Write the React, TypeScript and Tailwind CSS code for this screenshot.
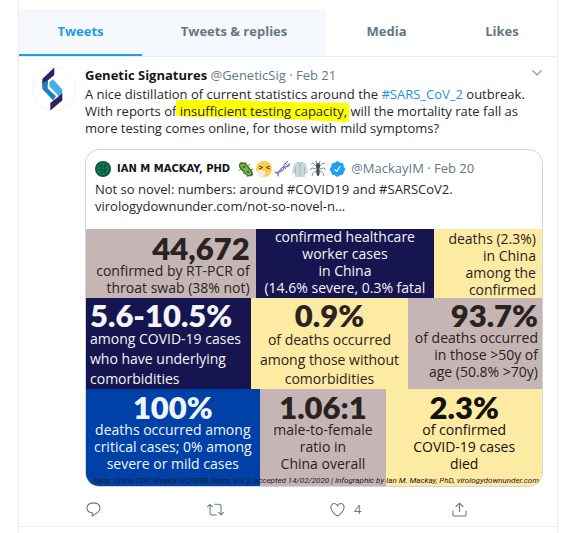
import React from 'react';

const tabs = [
  { id: 'tweets', label: 'Tweets', className: 'bg-[#f5f9fd] text-[#1d9ceb] border-[#1d9ceb]' },
  { id: 'replies', label: 'Tweets & replies', className: 'bg-[#f5f9fd] text-[#657786] border-transparent' },
  { id: 'media', label: 'Media', className: 'text-[#657786] border-transparent' },
  { id: 'likes', label: 'Likes', className: 'text-[#657786] border-transparent' },
];

const REPLY =
  'M14.046 2.242l-4.148-.01h-.002c-4.374 0-7.8 3.427-7.8 7.802 0 4.098 3.186 7.206 7.465 7.37v3.828c0 .108.044.286.12.403.142.225.384.347.632.347.138 0 .277-.038.402-.118.264-.168 6.473-4.14 8.088-5.506 1.902-1.61 3.04-3.97 3.043-6.312v-.017c-.006-4.367-3.43-7.787-7.8-7.788zm3.787 12.972c-1.134.96-4.862 3.405-6.772 4.643V16.67c0-.414-.335-.75-.75-.75h-.396c-3.66 0-6.318-2.476-6.318-5.886 0-3.534 2.768-6.302 6.3-6.302l4.147.01h.002c3.532 0 6.3 2.766 6.302 6.296-.003 1.91-.942 3.844-2.514 5.176z';
const RETWEET =
  'M23.77 15.67c-.292-.293-.767-.293-1.06 0l-2.22 2.22V7.65c0-2.068-1.683-3.75-3.75-3.75h-5.85c-.414 0-.75.336-.75.75s.336.75.75.75h5.85c1.24 0 2.25 1.01 2.25 2.25v10.24l-2.22-2.22c-.293-.293-.768-.293-1.06 0s-.294.768 0 1.06l3.5 3.5c.145.147.337.22.53.22s.383-.072.53-.22l3.5-3.5c.294-.292.294-.767 0-1.06zm-10.66 3.28H7.26c-1.24 0-2.25-1.01-2.25-2.25V6.46l2.22 2.22c.148.147.34.22.532.22s.384-.073.53-.22c.293-.293.293-.768 0-1.06l-3.5-3.5c-.293-.294-.768-.294-1.06 0l-3.5 3.5c-.294.292-.294.767 0 1.06s.767.293 1.06 0l2.22-2.22V16.7c0 2.068 1.683 3.75 3.75 3.75h5.85c.414 0 .75-.336.75-.75s-.337-.75-.75-.75z';
const LIKE =
  'M12 21.638h-.014C9.403 21.59 1.95 14.856 1.95 8.478c0-3.064 2.525-5.754 5.403-5.754 2.29 0 3.83 1.58 4.646 2.73.814-1.148 2.354-2.73 4.645-2.73 2.88 0 5.404 2.69 5.404 5.755 0 6.376-7.454 13.11-10.037 13.157H12zM7.354 4.225c-2.08 0-3.903 1.988-3.903 4.255 0 5.74 7.034 11.596 8.55 11.658 1.518-.062 8.55-5.917 8.55-11.658 0-2.267-1.823-4.255-3.903-4.255-2.528 0-3.94 2.936-3.952 2.965-.23.562-1.156.562-1.387 0-.014-.03-1.425-2.965-3.954-2.965z';
const SHARE =
  'M17.53 7.47l-5-5c-.293-.293-.768-.293-1.06 0l-5 5c-.294.293-.294.768 0 1.06s.767.294 1.06 0l3.72-3.72V15c0 .414.336.75.75.75s.75-.336.75-.75V4.81l3.72 3.72c.146.147.338.22.53.22s.384-.072.53-.22c.293-.293.293-.767 0-1.06zM19.708 21.944H4.292C3.028 21.944 2 20.916 2 19.652V14c0-.414.336-.75.75-.75s.75.336.75.75v5.652c0 .437.355.792.792.792h15.416c.437 0 .792-.355.792-.792V14c0-.414.336-.75.75-.75s.75.336.75.75v5.652c0 1.264-1.028 2.292-2.292 2.292z';
const VERIFIED =
  'M22.5 12.5c0-1.58-.875-2.95-2.148-3.6.154-.435.238-.905.238-1.4 0-2.21-1.71-3.998-3.818-3.998-.47 0-.92.084-1.336.25C14.818 2.415 13.51 1.5 12 1.5s-2.816.917-3.437 2.25c-.415-.165-.866-.25-1.336-.25-2.11 0-3.818 1.79-3.818 4 0 .494.083.964.237 1.4-1.272.65-2.147 2.018-2.147 3.6 0 1.495.782 2.798 1.942 3.486-.02.17-.032.34-.032.514 0 2.21 1.708 4 3.818 4 .47 0 .92-.086 1.335-.25.62 1.334 1.926 2.25 3.437 2.25 1.512 0 2.818-.916 3.437-2.25.415.163.865.248 1.336.248 2.11 0 3.818-1.79 3.818-4 0-.174-.012-.344-.033-.513 1.158-.687 1.943-1.99 1.943-3.484zm-6.616-3.334l-4.334 6.5c-.145.217-.382.334-.625.334-.143 0-.288-.04-.416-.126l-.115-.094-2.415-2.415c-.293-.293-.293-.768 0-1.06s.768-.294 1.06 0l1.77 1.767 3.825-5.74c.23-.345.696-.436 1.04-.207.346.23.44.696.21 1.04z';

const actions = [
  { label: 'Reply', path: REPLY, count: '' },
  { label: 'Retweet', path: RETWEET, count: '' },
  { label: 'Like', path: LIKE, count: '4' },
  { label: 'Share', path: SHARE, count: '' },
];

function Avatar() {
  return (
    <svg viewBox="0 0 44 44" className="w-11 h-11 shrink-0" aria-hidden="true">
      <circle cx="22" cy="22" r="21.500" fill="#fff" stroke="#f1f3f5" />
      <path d="M22.300 0.500V8L15.700 13.500V17L10.300 19V12z" fill="#2b2363" />
      <path d="M10.300 16L15.700 13.500V21.500L24 29L21.300 33.500L10.300 22z" fill="#1d7fbd" />
      <path d="M17.500 15L21 12.300L30.300 22.500V27.500L27 29.500L17.500 19.500z" fill="#45b0e2" />
      <path d="M30.300 26.500V33.500L18.300 43.500V36z" fill="#2b2363" />
    </svg>
  );
}

function VirusAvatar() {
  return (
    <svg viewBox="0 0 16 16" className="w-4 h-4 mr-1.5" aria-hidden="true">
      <circle cx="8" cy="8" r="8" fill="#0b5a3c" />
      <circle cx="8" cy="8" r="6" fill="#128055" />
      <path d="M3 6l3-2 3 2 3-2M3 9l3-1 3 2 4-2M5 12l3-1 3 1M6 3l1 9M10 3l0 9" stroke="#0a4a30" fill="none" />
    </svg>
  );
}

function Emojis() {
  return (
    <span className="flex gap-0.5 ml-2 mr-1" aria-hidden="true">
      {/* microbe */}
      <svg viewBox="0 0 16 16" className="w-4 h-4">
        <path d="M3 1l1 3M8 1L7 3M1 5l3 0M12 3l-2 2M15 8l-3 1M1 9l4-1M5 13l2-2M9 16l1-3M15 14l-3-1" stroke="#5c913b" strokeWidth="1" />
        <path d="M1.500 2.500c2-2 5.500-1.500 7.500 1l4 5c2.500 3 2.500 5.500 0.500 6.500s-5.500 0-7.500-3L2.500 8C0.500 6 0.500 3.500 1.500 2.500z" fill="#3e721d" />
        <path d="M2.500 3.500c2-1.500 4.500-0.500 5.500 1l4 5c1.500 2 1.500 3.500 0.500 4.500s-4.500 0-5.500-3L3.500 7C2.500 6 1.500 4.500 2.500 3.500z" fill="#77b255" />
        <circle cx="6" cy="6" r="1.200" fill="#3e721d" />
        <circle cx="10" cy="11" r="1.200" fill="#3e721d" />
      </svg>
      {/* sneezing face */}
      <svg viewBox="0 0 16 16" className="w-4 h-4">
        <circle cx="8" cy="8" r="8" fill="#ffcc4d" />
        <path d="M3 5l4 1.500-4 1.500M14 5l-4 1.500 4 1.500" stroke="#664500" fill="none" />
        <path d="M0.500 10.500l4-1.500 4 1.500 1 2-3 3-4 .5-2-2z" fill="#f4f7f9" />
        <path d="M2 12l3-1M3 14l4-1.500" stroke="#ccd6dd" strokeWidth=".7" />
      </svg>
      {/* dna */}
      <svg viewBox="0 0 16 16" className="w-4 h-4">
        <path d="M2 12l3 2M6 10l1 1M9 5l3 3M11 2l3 3" stroke="#dd2e44" strokeWidth=".8" />
        <path d="M0.500 11c6 2 5-3 8-4.500s6 1 7-4" stroke="#3b88c3" strokeWidth="1.300" fill="none" />
        <path d="M4 15.500c-1-6 4-4 5.500-7s-1-6 4.500-8" stroke="#9268ca" strokeWidth="1.300" fill="none" />
      </svg>
      {/* lab coat */}
      <svg viewBox="0 0 16 16" className="w-4 h-4">
        <path d="M5 1h6l3 2 2 9-3 1v3H3v-3l-3-1 2-9z" fill="#ccd6dd" />
        <path d="M6 1l2 4 2-4M8 5v10M3.500 6v7M12.500 6v7" stroke="#a9b8c2" fill="none" />
      </svg>
      {/* mosquito */}
      <svg viewBox="0 0 16 16" className="w-4 h-4">
        <path d="M7 6L3 2 1 3M7 8L2 7 0 9M7 10l-4 2-1 3M9 6l4-4 2 1M9 8l5-1 2 2M9 10l4 2 1 3M7 3L6 0M9 3l1-3" stroke="#66757f" strokeWidth=".8" fill="none" />
        <path d="M7 7L2 12l2 1zM9 7l5 5-2 1z" fill="#ccd6dd" />
        <ellipse cx="8" cy="5" rx="2" ry="3" fill="#434b50" />
        <ellipse cx="8" cy="11" rx="1.600" ry="4" fill="#434b50" />
      </svg>
      <svg viewBox="1 1 22 22" className="w-[19px] h-4" fill="#1da1f2">
        <path d={VERIFIED} />
      </svg>
    </span>
  );
}

interface StatProps {
  value?: string;
  lines: string[];
  className: string;
}

function Stat({ value, lines, className }: StatProps) {
  return (
    <div className={`flex flex-col overflow-hidden whitespace-nowrap ${className}`}>
      {value && <strong className="font-[Lato] font-extrabold text-[31px] leading-7">{value}</strong>}
      {lines.map((line) => (
        <span key={line}>{line}</span>
      ))}
    </div>
  );
}

function Infographic() {
  return (
    <div className="relative font-['Open_Sans',sans-serif] text-sm leading-[17px] text-[#2a2321]">
      <div className="grid grid-cols-[170fr_179fr_108fr] h-[69px]">
        <Stat value="44,672" lines={['confirmed by RT-PCR of', 'throat swab (38% not)']} className="bg-[#c5b5b5] items-end justify-end pb-0.5 pr-1.5" />
        <Stat lines={['confirmed healthcare', 'worker cases', 'in China', '(14.6% severe, 0.3% fatal']} className="bg-[#17154f] text-[#f4f4fa] items-center justify-end pb-0.5" />
        <Stat lines={['deaths (2.3%)', 'in China', 'among the', 'confirmed']} className="bg-[#fdeba3] items-end justify-end pr-1.5" />
      </div>
      <div className="grid grid-cols-[165fr_158fr_134fr]">
        <Stat value="5.6-10.5%" lines={['among COVID-19 cases', 'who have underlying', 'comorbidities']} className="bg-[#17154f] text-[#f4f4fa] items-start pt-[3px] pl-1 leading-5" />
        <Stat value="0.9%" lines={['of deaths occurred', 'among those without', 'comorbidities']} className="bg-[#fdeba3] items-center justify-between pt-[3px] pb-0.5" />
        <Stat value="93.7%" lines={['of deaths occurred', 'in those >50y of', 'age (50.8% >70y)']} className="bg-[#c5b5b5] items-end pt-[3px] pr-1" />
      </div>
      <div className="grid grid-cols-[174fr_127fr_156fr]">
        <Stat value="100%" lines={['deaths occurred among', 'critical cases; 0% among', 'severe or mild cases']} className="bg-[#0041a8] text-[#f0f5fc] items-center pt-1 pb-3.5" />
        <Stat value="1.06:1" lines={['male-to-female', 'ratio in', 'China overall']} className="bg-[#c5b5b5] items-center pt-1 pb-3.5" />
        <Stat value="2.3%" lines={['of confirmed', 'COVID-19 cases', 'died']} className="bg-[#fdeba3] text-[#15110f] items-center pt-1 pb-3.5" />
      </div>
      <p className="absolute bottom-0 left-2 whitespace-nowrap italic font-[Roboto] text-[8px] leading-[10px] text-[#1d1a1c]">
        Data: China CDC Weekly NCPERE Team, Vol 2; accepted 14/02/2020 | Infographic by Ian M. Mackay, PhD, virologydownunder.com
      </p>
    </div>
  );
}

function QuotedTweet() {
  return (
    <article className="mt-3 border border-[#ccd6dd] rounded-[14px] overflow-hidden">
      <div className="px-[9px] pt-2.5 pb-3.5">
        <header className="flex items-center h-[17px] whitespace-nowrap text-[#657786]">
          <VirusAvatar />
          <strong className="font-['DejaVu_Sans',sans-serif] text-[10px] text-[#14171a]">IAN M MACKAY, PHD</strong>
          <Emojis />
          <span>@MackayIM · Feb 20</span>
        </header>
        <p className="mt-1">
          Not so novel: numbers: around #COVID19 and #SARSCoV2.
          <br />
          virologydownunder.com/not-so-novel-n...
        </p>
      </div>
      <Infographic />
    </article>
  );
}

export default function App() {
  return (
    <main className="pl-[18px] pr-4 bg-white min-h-screen flex font-['Open_Sans',sans-serif] text-[13px] leading-[17px] text-[#25292d]">
      <div className="flex-1 min-w-0 border-x border-[#e6ecf0] pt-[9px]">
        <nav className="grid grid-cols-[123fr_184fr_121fr_110fr] border-b border-[#e6ecf0]">
          {tabs.map((tab) => (
            <button key={tab.id} className={`h-[47px] border-b-2 font-bold ${tab.className}`}>
              {tab.label}
            </button>
          ))}
        </nav>

        <article className="flex gap-[9px] pl-[13px] pr-3.5 pt-2.5 pb-2 border-b border-[#e6ecf0]">
          <Avatar />
          <div className="flex-1 min-w-0">
            <header className="flex items-start justify-between">
              <p className="text-[#657786] whitespace-nowrap">
                <strong className="text-[#14171a]">Genetic Signatures</strong> @GeneticSig · Feb 21
              </p>
              <button aria-label="More">
                <svg viewBox="0 0 12 12" className="w-3 h-3" fill="none" stroke="#8596a3" strokeWidth="1.200">
                  <path d="M1.500 3.500L6 8l4.500-4.500" />
                </svg>
              </button>
            </header>
            <p className="mt-0.5 whitespace-nowrap">
              A nice distillation of current statistics around the{' '}
              <a href="#sars" className="text-[#1b95e0]">#SARS_CoV_2</a> outbreak.
              <br />
              With reports of{' '}
              <span className="relative isolate">
                <svg viewBox="0 0 174 24" preserveAspectRatio="none" className="absolute -z-10 -left-1 -top-1 w-[calc(100%+6px)] h-6" aria-hidden="true">
                  <path d="M0 2l60 0 40 2 74 1v19l-24-1-60-3-70-1-20-1z" fill="#ff0" />
                </svg>
                insufficient testing capacity,
              </span>{' '}
              will the mortality rate fall as
              <br />
              more testing comes online, for those with mild symptoms?
            </p>
            <QuotedTweet />
            <footer className="mt-3.5 flex">
              {actions.map((action) => (
                <button key={action.label} aria-label={action.label} className="w-[122px] last:w-auto shrink-0 flex items-center gap-2 text-[#657786]">
                  <svg viewBox="0 0 24 24" className="w-[17px] h-[17px]" fill="#657786">
                    <path d={action.path} />
                  </svg>
                  {action.count}
                </button>
              ))}
            </footer>
          </div>
        </article>
      </div>
    </main>
  );
}
